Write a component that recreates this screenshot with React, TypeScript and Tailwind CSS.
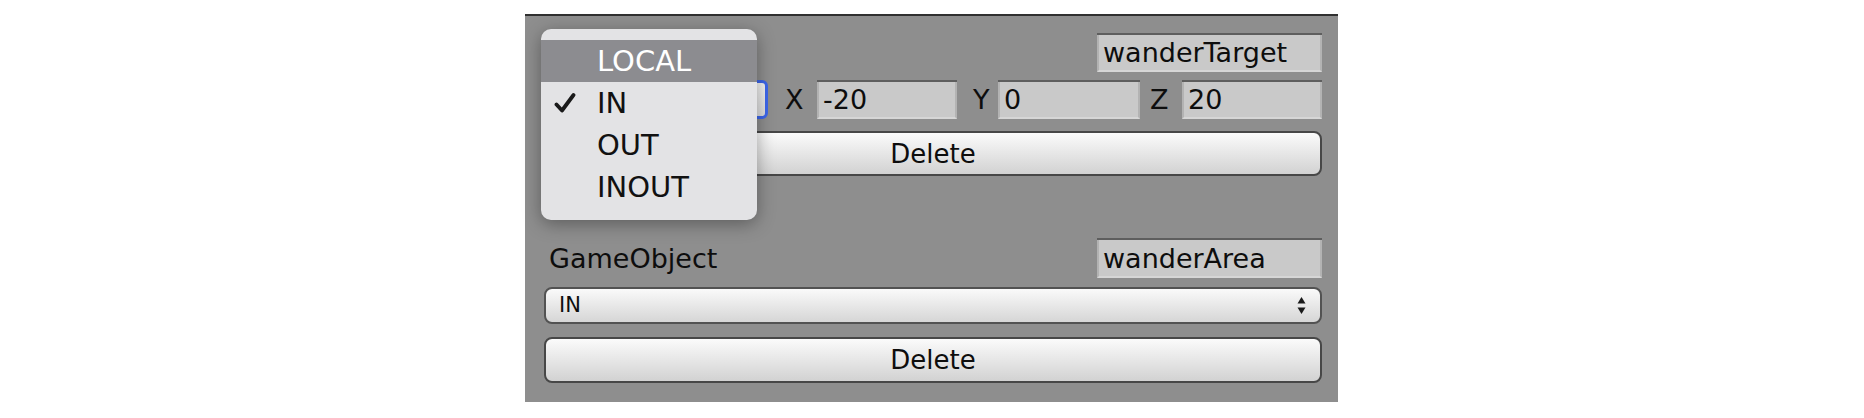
import React from 'react';

const font = { fontFamily: '"DejaVu Sans", "Liberation Sans", sans-serif' };

const Field: React.FC<{ value: string; className?: string }> = ({ value, className = '' }) => (
  <div className={`border-t-2 border-[#5e5e5e] ${className}`}>
    <div className="h-full bg-[#c9c9c9] border-x-2 border-b-2 border-[#b3b3b3] border-b-[#d6d6d6] flex items-center pl-[4px] text-[27px] leading-none text-[#0d0d0d]">
      {value}
    </div>
  </div>
);

const Button: React.FC<{ label: string; className?: string }> = ({ label, className = '' }) => (
  <div className={`w-full rounded-[8px] border-2 border-[#474747] bg-gradient-to-b from-[#fbfbfb] to-[#d2d2d2] flex items-center justify-center text-[26px] leading-none text-[#0d0d0d] ${className}`}>
    {label}
  </div>
);

const Arrows: React.FC = () => (
  <svg width="9" height="17" viewBox="0 0 9 17">
    <polygon points="4.5,0 8.5,6.5 0.5,6.5" fill="#1a1a1a" />
    <polygon points="0.5,10.5 8.5,10.5 4.5,17" fill="#1a1a1a" />
  </svg>
);

const Check: React.FC = () => (
  <svg width="22" height="22" viewBox="0 0 22 22">
    <path d="M2.5 12.5 L8 18.5 L19.5 3" fill="none" stroke="#1a1a1a" strokeWidth="3.8" strokeLinecap="round" strokeLinejoin="round" />
  </svg>
);

const MENU = ['LOCAL', 'IN', 'OUT', 'INOUT'];

const App: React.FC = () => {
  return (
    <main className="bg-white w-[1864px] h-[418px] pl-[525px] pt-[14px]" style={font}>
      <div className="relative w-[813px] h-[388px] bg-[#8e8e8e] border-t-2 border-[#303030] pl-[19px] pr-[16px] pt-[17px] flex flex-col">
        {/* row 1 */}
        <div className="h-[39px] flex justify-end">
          <Field value="wanderTarget" className="w-[225px] h-[39px]" />
        </div>

        {/* row 2 */}
        <div className="h-[39px] mt-[8px] flex items-center">
          <div className="w-[224px] h-[39px] rounded-[6px] border-[3px] border-[#3c66ea] bg-gradient-to-b from-[#f4f4f4] to-[#dcdcdc]" />
          <span className="ml-[17px] w-[32px] text-[27px] leading-none text-[#0d0d0d]">X</span>
          <Field value="-20" className="w-[140px] h-[39px]" />
          <span className="ml-[16px] w-[25px] text-[27px] leading-none text-[#0d0d0d]">Y</span>
          <Field value="0" className="w-[142px] h-[39px]" />
          <span className="ml-[10px] w-[32px] text-[27px] leading-none text-[#0d0d0d]">Z</span>
          <Field value="20" className="w-[140px] h-[39px]" />
        </div>

        <Button label="Delete" className="h-[45px] mt-[12px]" />

        {/* row 4 */}
        <div className="h-[40px] mt-[62px] flex items-center justify-between">
          <span className="pl-[5px] text-[27px] leading-none text-[#0d0d0d]">GameObject</span>
          <Field value="wanderArea" className="w-[225px] h-[40px]" />
        </div>

        <div className="h-[37px] mt-[9px] rounded-[8px] border-2 border-[#525252] bg-gradient-to-b from-[#fafafa] to-[#d6d6d6] flex items-center justify-between pl-[13px] pr-[14px]">
          <span className="text-[21px] leading-none text-[#0d0d0d]">IN</span>
          <Arrows />
        </div>

        <Button label="Delete" className="h-[46px] mt-[13px]" />

        {/* popup menu */}
        <div className="absolute left-[16px] top-[13px] w-[216px] h-[191px] rounded-[10px] bg-[#e3e3e5] shadow-[0_4px_18px_rgba(0,0,0,0.35)] pt-[11px] overflow-hidden">
          {MENU.map((item, i) => (
            <div
              key={item}
              className={`h-[42px] flex items-center relative pl-[56px] text-[29px] leading-none ${i === 0 ? 'bg-[#8c8c90] text-white' : 'text-[#111]'}`}
            >
              {item === 'IN' && (
                <span className="absolute left-[13px] top-[10px]">
                  <Check />
                </span>
              )}
              {item}
            </div>
          ))}
        </div>
      </div>
    </main>
  );
};

export default App;
